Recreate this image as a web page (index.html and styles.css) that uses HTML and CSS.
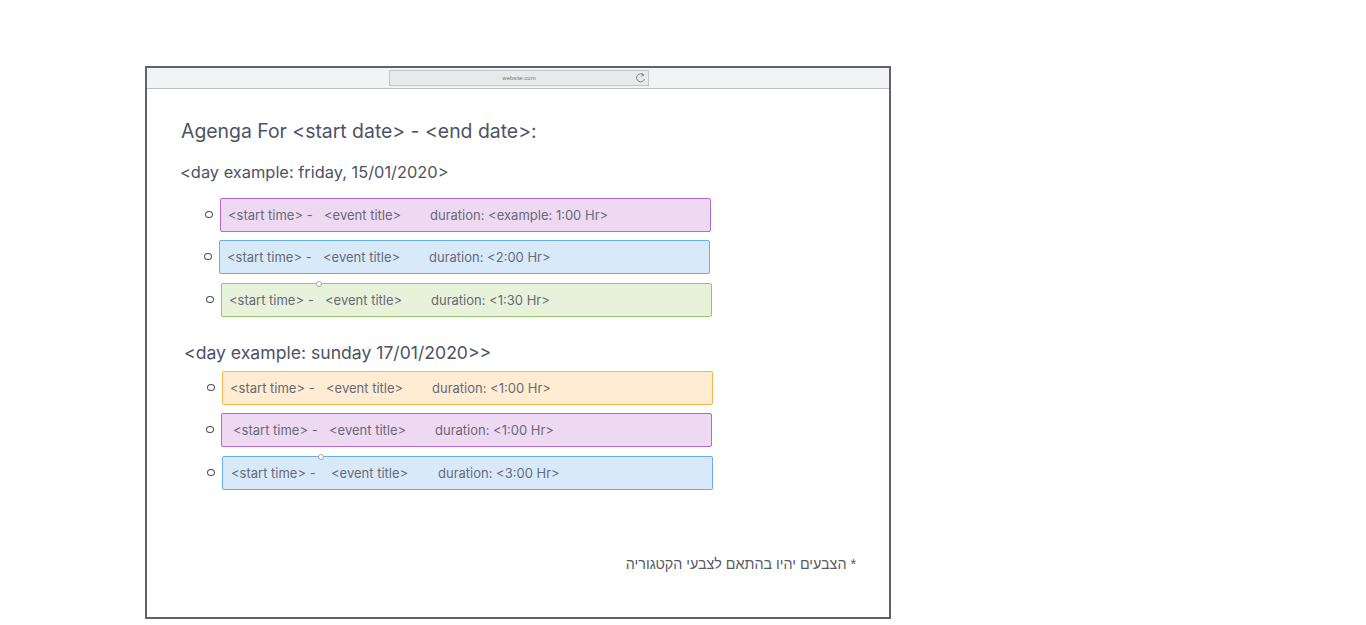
FILE: index.html
```html
<!DOCTYPE html>
<html lang="en">
<head>
<meta charset="utf-8">
<title>Agenda</title>
<link rel="stylesheet" href="styles.css">
</head>
<body>
<div class="page">
  <div class="frame">
    <div class="toolbar">
      <div class="urlbar">
        <span class="url">website.com</span>
        <svg class="reload" width="11" height="12" viewBox="0 0 11 12">
          <path d="M8.6 3.2 A4 4 0 1 0 9.4 7" fill="none" stroke="#7a7f88" stroke-width="1"/>
          <path d="M6.8 1.2 L8.8 3.3 L6.4 4.2" fill="none" stroke="#7a7f88" stroke-width="1"/>
        </svg>
      </div>
    </div>
    <div class="content">
      <h1 class="title">Agenga For &lt;start date&gt; - &lt;end date&gt;:</h1>
      <h2 class="day day1">&lt;day example: friday, 15/01/2020&gt;</h2>
      <ul class="events">
        <li class="event"><span class="bullet"></span><div class="box purple"><span class="t1">&lt;start time&gt; -</span><span class="t2">&lt;event title&gt;</span><span class="t3">duration: &lt;example: 1:00 Hr&gt;</span></div></li>
        <li class="event shift-1"><span class="bullet"></span><div class="box blue"><span class="t1">&lt;start time&gt; -</span><span class="t2">&lt;event title&gt;</span><span class="t3">duration: &lt;2:00 Hr&gt;</span></div></li>
        <li class="event shift1 drop"><span class="bullet"></span><div class="box green"><span class="dot"></span><span class="t1">&lt;start time&gt; -</span><span class="t2">&lt;event title&gt;</span><span class="t3">duration: &lt;1:30 Hr&gt;</span></div></li>
      </ul>
      <h2 class="day day2">&lt;day example: sunday 17/01/2020&gt;&gt;</h2>
      <ul class="events">
        <li class="event shift2"><span class="bullet"></span><div class="box orange"><span class="t1">&lt;start time&gt; -</span><span class="t2">&lt;event title&gt;</span><span class="t3">duration: &lt;1:00 Hr&gt;</span></div></li>
        <li class="event shift1"><span class="bullet"></span><div class="box purple pad5"><span class="t1">&lt;start time&gt; -</span><span class="t2">&lt;event title&gt;</span><span class="t3">duration: &lt;1:00 Hr&gt;</span></div></li>
        <li class="event shift2 drop"><span class="bullet"></span><div class="box blue wide"><span class="dot dot2"></span><span class="t1">&lt;start time&gt; -</span><span class="t2 t2w">&lt;event title&gt;</span><span class="t3">duration: &lt;3:00 Hr&gt;</span></div></li>
      </ul>
      <p class="note" dir="rtl" lang="he">* הצבעים יהיו בהתאם לצבעי הקטגוריה</p>
    </div>
  </div>
</div>
</body>
</html>
```

FILE: styles.css
```css
* { box-sizing: border-box; }
html, body { margin: 0; padding: 0; background: #ffffff; }
body { font-family: Inter, "Noto Sans", sans-serif; }

.page {
  padding: 66px 0 0 145px;
}

.frame {
  width: 746px;
  height: 553px;
  border: 2px solid #5c6274;
  background: #ffffff;
  display: flex;
  flex-direction: column;
}

.toolbar {
  height: 21px;
  background: #f2f3f4;
  border-bottom: 1px solid #b9bcc2;
  display: flex;
  justify-content: center;
  align-items: center;
  padding-left: 2px;
}

.urlbar {
  position: relative;
  width: 260px;
  height: 16px;
  background: #e8e9eb;
  border: 1px solid #c3c5c9;
  display: flex;
  align-items: center;
  justify-content: center;
}

.url {
  font-family: "Liberation Sans", Arial, sans-serif;
  font-size: 6px;
  color: #777b82;
}

.reload {
  position: absolute;
  right: 2px;
  top: 1px;
}

.content {
  flex: 1;
  padding: 30px 0 0 34px;
  display: flex;
  flex-direction: column;
}

.title {
  margin: 0;
  font-size: 19.4px;
  line-height: 24px;
  font-weight: 400;
  color: #4c5365;
}

.day {
  margin: 0;
  font-weight: 400;
  color: #4c5365;
}

.day1 {
  margin-top: 19px;
  font-size: 16.4px;
  line-height: 20px;
  margin-left: -1px;
}

.day2 {
  margin-top: 25px;
  font-size: 17.6px;
  line-height: 22px;
  margin-left: 3px;
}

.events {
  list-style: none;
  margin: 16px 0 0 0;
  padding: 0 0 0 24px;
  display: flex;
  flex-direction: column;
  gap: 8px;
}

.day2 + .events { margin-top: 7px; }

.event {
  display: flex;
  align-items: center;
  gap: 7px;
}

.drop { margin-top: 1px; }
.shift-1 { margin-left: -1px; }
.shift1 { margin-left: 1px; }
.shift2 { margin-left: 2px; }

.bullet {
  width: 8px;
  height: 7px;
  border: 1.5px solid #4a4f5a;
  border-radius: 50%;
  flex: none;
  margin-top: -2px;
}

.box {
  position: relative;
  width: 491px;
  height: 34px;
  border: 1px solid;
  border-radius: 2px;
  display: flex;
  align-items: center;
  padding-left: 7px;
  font-size: 13px;
  color: #676a78;
  white-space: pre;
}

.box.pad5 { padding-left: 11px; }
.box.wide { width: 491px; padding-left: 8px; }

.t1 { width: 96px; }
.t2 { width: 106px; }
.t2.t2w { width: 107px; }
.box.wide .t1 { width: 100px; }

.purple { background: #eed9f2; border-color: #b867cc; }
.blue { background: #d8eafa; border-color: #66aee8; }
.green { background: #e6f2da; border-color: #92c867; }
.orange { background: #ffecd3; border-color: #f4b54a; }

.dot {
  position: absolute;
  left: 94px;
  top: -3px;
  width: 6px;
  height: 6px;
  border: 1px solid #a4a8a4;
  border-radius: 50%;
  background: #ffffff;
}

.dot2 { left: 95px; top: -3px; }

.note {
  margin: 65px 0 0 0;
  width: 675px;
  font-family: "Liberation Sans", Arial, sans-serif;
  font-size: 14.3px;
  line-height: 18px;
  color: #555a66;
  text-align: right;
}
```
